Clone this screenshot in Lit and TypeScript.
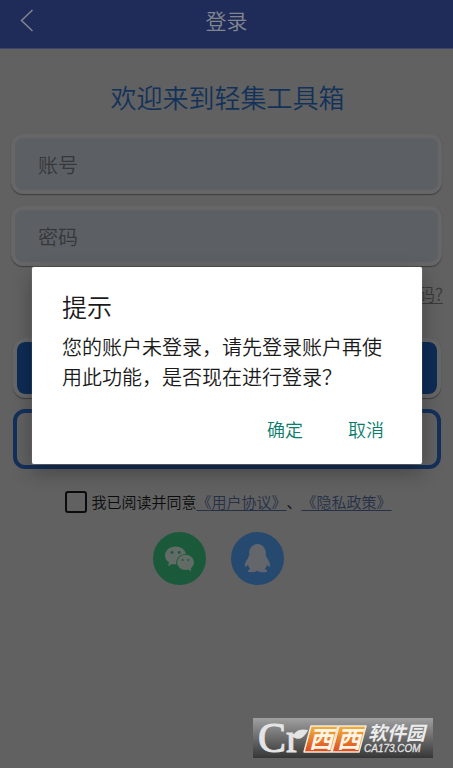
import { LitElement, html, css } from "lit";
import { customElement, state } from "lit/decorators.js";

@customElement("app-root")
export class AppRoot extends LitElement {
  static styles = css`
    :host {
      display: block;
      position: relative;
      min-height: 100vh;
      background: #616161;
      color: #0c0c0c;
      font-family: "Noto Sans CJK SC", "Noto Sans", sans-serif;
      font-weight: 350;
      text-spacing-trim: space-all;
    }
    * {
      box-sizing: border-box;
    }
    button {
      font: inherit;
      padding: 0;
      border: 0;
      background: none;
      cursor: pointer;
    }
    .bar {
      display: grid;
      grid-template-columns: 48px 1fr 48px;
      align-items: center;
      height: 49px;
      padding-bottom: 8px;
      background: #1f2b58;
      border-bottom: 1px solid #3e4568;
      color: #82868f;
    }
    .back {
      display: grid;
      padding-left: 18px;
      color: inherit;
    }
    .bar h1 {
      margin: 0;
      font-size: 21px;
      line-height: 30px;
      font-weight: inherit;
      text-align: center;
    }
    .welcome {
      margin: 0;
      padding: 28px 0 17px 2px;
      font-size: 26px;
      line-height: 40px;
      font-weight: inherit;
      text-align: center;
      color: #13325a;
    }
    .form {
      display: grid;
      gap: 12px;
      padding: 0 11px;
    }
    .field {
      width: 100%;
      height: 60px;
      padding: 0 23px;
      border: 4px solid #666666;
      border-radius: 12px;
      background: #5c6065;
      background-clip: padding-box;
      box-shadow: 0 1px 1px #3c3c3c;
      font: inherit;
      font-size: 20px;
      color: #333538;
      outline: none;
    }
    .field::placeholder {
      color: #35373a;
      opacity: 1;
    }
    .forgot {
      display: flex;
      justify-content: flex-end;
      padding: 15px 10px 0;
    }
    .forgot a {
      font-size: 17px;
      line-height: 26px;
      color: #3a3a3a;
      text-underline-offset: 2px;
    }
    .actions {
      display: grid;
      gap: 11px;
      padding: 31px 12px 0 13px;
    }
    .primary,
    .outline {
      height: 60px;
      border-radius: 12px;
    }
    .primary {
      border: 4px solid #666666;
      background: #0e2c56;
      background-clip: padding-box;
      box-shadow: 0 1px 1px #3c3c3c;
    }
    .outline {
      border: 4px solid #14305a;
    }
    .agree {
      display: flex;
      justify-content: center;
      align-items: center;
      gap: 4px;
      padding: 22px 0 0 4px;
      font-size: 15px;
      line-height: 22px;
    }
    .agree input {
      appearance: none;
      width: 22px;
      height: 22px;
      margin: 0;
      border: 2px solid #0c0c0c;
      border-radius: 3px;
    }
    .agree input:checked {
      background: #14305a;
    }
    .agree a {
      color: #263047;
      text-underline-offset: 2px;
    }
    .social {
      display: flex;
      justify-content: center;
      gap: 25px;
      padding: 19px 16px 0 0;
    }
    .social button,
    .social svg {
      display: block;
      width: 53px;
      height: 53px;
    }
    .scrim {
      position: absolute;
      inset: 0;
      padding: 267px 31px 0 32px;
    }
    .dialog {
      padding: 21px 28px 18px 30px;
      background: #ffffff;
      border-radius: 2px;
      box-shadow: 0 8px 20px rgba(0, 0, 0, 0.3), 0 0 1px #d0d0d0;
      color: #1a1a1a;
    }
    .dialog h2 {
      margin: 0;
      font-size: 25px;
      line-height: 36px;
      font-weight: inherit;
    }
    .dialog p {
      margin: 8px 0 20px;
      font-size: 20px;
      line-height: 30px;
    }
    .choices {
      display: flex;
      justify-content: flex-end;
      gap: 45px;
      padding-right: 10px;
    }
    .choices button {
      font-size: 18px;
      line-height: 34px;
      color: #087d6c;
    }
    .mark {
      position: absolute;
      right: 20px;
      top: 718px;
      width: 180px;
      height: 40px;
    }
    .mark svg {
      display: block;
      overflow: visible;
    }
    .serif {
      font-family: "Liberation Serif", serif;
    }
    .cjk {
      font-family: "Noto Sans CJK SC", sans-serif;
      font-weight: 700;
    }
    .latin {
      font-family: "Liberation Sans", sans-serif;
      font-weight: 400;
    }
  `;

  @state() private open = true;

  private close = () => {
    this.open = false;
  };

  private renderDialog() {
    return html`
      <div class="scrim">
        <section class="dialog" role="dialog" aria-modal="true" aria-labelledby="tip">
          <h2 id="tip">提示</h2>
          <p>您的账户未登录，请先登录账户再使用此功能，是否现在进行登录？</p>
          <div class="choices">
            <button @click=${this.close}>确定</button>
            <button @click=${this.close}>取消</button>
          </div>
        </section>
      </div>
    `;
  }

  render() {
    return html`
      <header class="bar">
        <button class="back" aria-label="返回">
          <svg width="18" height="24" viewBox="0 0 18 24" fill="none" stroke="currentColor" stroke-width="1.5">
            <path d="M14.5 2 3.5 12.5 14.5 23" />
          </svg>
        </button>
        <h1>登录</h1>
      </header>
      <main>
        <h2 class="welcome">欢迎来到轻集工具箱</h2>
        <div class="form">
          <input class="field" type="text" placeholder="账号" aria-label="账号" />
          <input class="field" type="password" placeholder="密码" aria-label="密码" />
        </div>
        <div class="forgot"><a href="#forgot">忘记密码?</a></div>
        <div class="actions">
          <button class="primary" aria-label="登录"></button>
          <button class="outline" aria-label="注册"></button>
        </div>
        <div class="agree">
          <input id="agree" type="checkbox" />
          <div>
            <label for="agree">我已阅读并同意</label><a href="#terms">《用户协议》</a>、<a href="#privacy">《隐私政策》</a>
          </div>
        </div>
        <div class="social">
          <button aria-label="微信">
            <svg viewBox="0 0 53 53">
              <circle cx="26.5" cy="26.5" r="26.5" fill="#1a5a3b" />
              <path fill="#626b66" d="M22.5 14.5C16.5 14.5 12 18.4 12 23.4c0 2.900 1.500 5.300 4 6.900l-.9 4 4.200-2.300c1.300.3 2.700.4 4 .3-.9-5.600 3.700-10.300 9.700-10.300-.8-4.500-5.200-7.500-10.500-7.500z" />
              <ellipse cx="32.5" cy="30.3" rx="8.5" ry="7.6" fill="#626b66" />
              <path fill="#626b66" d="M34 37l4.300 2.200-.8-4.200z" />
              <g fill="#1a5a3b">
                <circle cx="19" cy="20.5" r="1.4" /><circle cx="26.3" cy="20.5" r="1.4" />
                <circle cx="29.7" cy="28" r="1" /><circle cx="35.3" cy="28" r="1" />
              </g>
            </svg>
          </button>
          <button aria-label="QQ">
            <svg viewBox="0 0 53 53">
              <circle cx="26.5" cy="26.5" r="26.5" fill="#25496f" />
              <path fill="#63676c" d="M26.500 12c-4.800 0-8.300 4-8.300 9v2.500c-.8.800-1.100 1.600-1 2.500-2.200 2.600-3.500 5.500-3.400 8.200.6 1.300 2.200-.4 3.200-1.500.3 1.700 1.100 3 2.300 4.200-1.800.6-2.500 1.300-2.300 2.300.5 1.600 6.800 1.500 9.500-.4 2.700 1.900 9 2 9.500.4.200-1-.5-1.700-2.300-2.300 1.200-1.200 2-2.500 2.300-4.200 1 1.100 2.600 2.800 3.200 1.500.1-2.700-1.200-5.600-3.400-8.200.1-.9-.2-1.700-1-2.500V21c0-5-3.500-9-8.300-9z" />
            </svg>
          </button>
        </div>
      </main>
      ${this.open ? this.renderDialog() : null}
      <aside class="mark">
        <svg width="180" height="40" viewBox="0 0 180 40">
          <defs>
            <linearGradient id="plate" x2="0" y2="1">
              <stop stop-color="#a0a0a0" /><stop offset="1" stop-color="#363636" />
            </linearGradient>
            <linearGradient id="tile" x2="0" y2="1">
              <stop stop-color="#f0b43c" /><stop offset="1" stop-color="#dc4b1c" />
            </linearGradient>
          </defs>
          <rect width="180" height="40" fill="url(#plate)" />
          <text class="serif" x="5" y="34" font-size="42" fill="#e4e4e4" stroke="#e4e4e4">Cr</text>
          <path fill="#e4e4e4" d="M40 19c2-6 6-9 15-7-4 8-9 11-15 7z" />
          <g fill="url(#tile)" stroke="#f4e8da" stroke-width="1.5" stroke-linejoin="round">
            <path d="M58 8h27l-7 26H51z" />
            <path d="M86 8h27l-7 26H79z" />
          </g>
          <text class="cjk" x="56 84" y="30" font-size="24" font-style="italic" fill="#fff4e6">西西</text>
          <text class="cjk" x="115" y="22" font-size="19" font-style="italic" fill="#ececec">软件园</text>
          <text class="latin" x="111" y="34" font-size="10" font-style="italic" fill="#e4e4e4" stroke="#e4e4e4" stroke-width="0.3">CA173.COM</text>
        </svg>
      </aside>
    `;
  }
}
